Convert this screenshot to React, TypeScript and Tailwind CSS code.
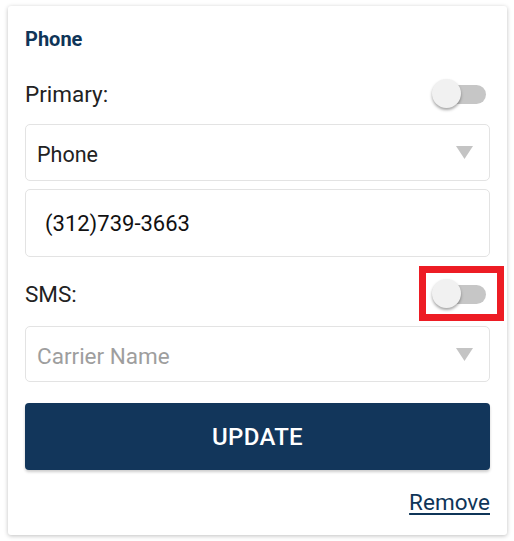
import React from "react";

function Toggle() {
  return (
    <div className="relative w-[54px] h-[30px] flex items-center">
      <div className="w-[53px] h-[19px] rounded-full bg-[#c6c6c6] ml-[1px]" />
      <div className="absolute left-0 top-[0px] w-[29px] h-[29px] rounded-full bg-[#f1f1f1] shadow-[0_2px_3px_rgba(0,0,0,0.35)]" />
    </div>
  );
}

function Caret() {
  return (
    <svg width="17" height="13" viewBox="0 0 17 13">
      <polygon points="0,0 17,0 8.5,13" fill="#c4c4c4" />
    </svg>
  );
}

export default function App() {
  return (
    <div className="w-[514px] h-[541px] bg-white pt-[6px] pl-[8px] font-['Roboto',sans-serif]">
      <div className="w-[499px] h-[529px] bg-white rounded-[3px] shadow-[0_1px_4px_rgba(0,0,0,0.25)] px-[17px] pt-[21px]">
        <h2 className="text-[20px] leading-[24px] font-bold text-[#0f3558]">Phone</h2>

        <div className="mt-[25px] h-[36px] flex items-center justify-between">
          <span className="text-[22.5px] text-[#222] pt-[2px]">Primary:</span>
          <div className="mr-[4px]">
            <Toggle />
          </div>
        </div>

        <div className="mt-[12px] h-[57px] border border-[#e3e3e3] rounded-[5px] flex items-center justify-between pl-[11px] pr-[16px]">
          <span className="text-[21.5px] text-[#222] pt-[5px]">Phone</span>
          <Caret />
        </div>

        <div className="mt-[8px] h-[68px] border border-[#e3e3e3] rounded-[5px] flex items-center pl-[19px]">
          <span className="text-[22px] text-[#111] pt-[1px]">(312)739-3663</span>
        </div>

        <div className="mt-[19px] h-[36px] flex items-center justify-between">
          <span className="text-[22.5px] text-[#222] pt-[2px]">SMS:</span>
          <div className="relative mr-[4px]">
            <Toggle />
            <div className="absolute left-[-13px] top-[-13px] w-[85px] h-[55px] border-[7px] border-[#ed1c24]" />
          </div>
        </div>

        <div className="mt-[14px] h-[56px] border border-[#e3e3e3] rounded-[5px] flex items-center justify-between pl-[11px] pr-[16px]">
          <span className="text-[22.5px] text-[#9e9e9e] pt-[5px]">Carrier Name</span>
          <Caret />
        </div>

        <button className="mt-[21px] w-full h-[67px] bg-[#12365b] rounded-[4px] shadow-[0_2px_3px_rgba(0,0,0,0.2)] text-white text-[24px] font-medium tracking-[0.3px]">
          UPDATE
        </button>

        <div className="mt-[19px] flex justify-end">
          <a className="text-[22.5px] leading-[26px] text-[#0f3558] underline underline-offset-[3px]">Remove</a>
        </div>
      </div>
    </div>
  );
}
